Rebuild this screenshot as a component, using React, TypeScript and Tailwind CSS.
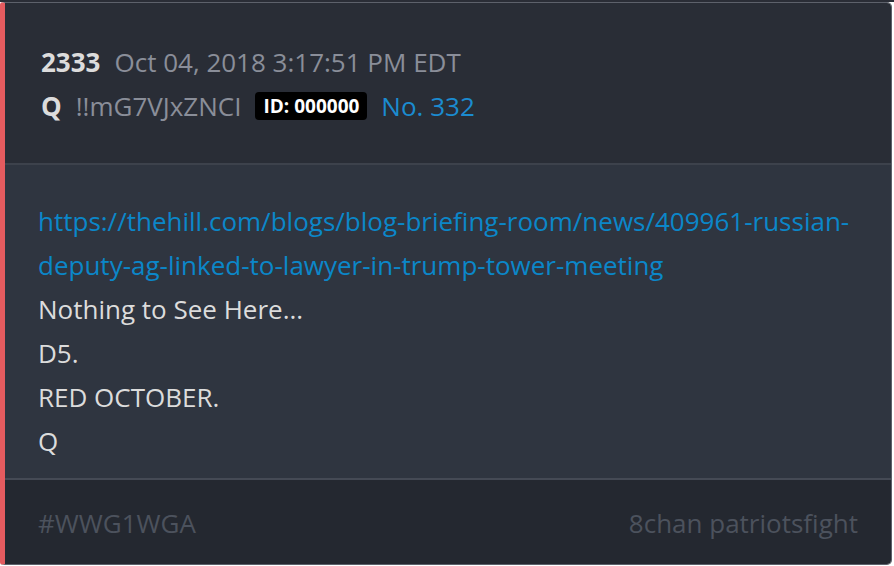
export default function App() {
  return (
    <div className="bg-white w-[894px] h-[566px]" style={{ fontFamily: '"Open Sans", "Noto Sans", sans-serif' }}>
      <div className="h-[2px] bg-[#2a2d36]" />
      <div className="w-[892px] h-[563px] flex flex-col border border-[#5d616b] border-l-[5px] border-l-[#e55b5f] rounded-r-[5px] rounded-l-[3px] overflow-hidden">
        {/* header */}
        <div className="h-[160px] bg-[#292d36] pl-[36px] pt-[37px] text-[26px] leading-[44px]">
          <div className="flex items-center">
            <span className="font-bold text-[#dcdcdc]">2333</span>
            <span className="ml-[14px] text-[#8a8e99]">Oct 04, 2018 3:17:51 PM EDT</span>
          </div>
          <div className="flex items-center">
            <span className="font-bold text-[#dcdcdc]">Q</span>
            <span className="ml-[14px] text-[#8a8e99]">!!mG7VJxZNCI</span>
            <span className="ml-[14px] bg-black text-white font-bold text-[19px] leading-[28px] px-[8px] rounded-[4px]">ID: 000000</span>
            <span className="ml-[14px] text-[#1b8bd0]">No. 332</span>
          </div>
        </div>
        <div className="h-[2px] bg-[#3d424c]" />
        {/* body */}
        <div className="flex-1 bg-[#2f3540] pl-[33px] pr-[30px] pt-[34px] text-[26px] leading-[44px] text-[#dcdcdc]">
          <div className="text-[#0b87c9]">https://thehill.com/blogs/blog-briefing-room/news/409961-russian-deputy-ag-linked-to-lawyer-in-trump-tower-meeting</div>
          <div>Nothing to See Here...</div>
          <div>D5.</div>
          <div>RED OCTOBER.</div>
          <div>Q</div>
        </div>
        <div className="h-[2px] bg-[#454a55]" />
        {/* footer */}
        <div className="h-[84px] bg-[#242830] pl-[33px] pr-[33px] pt-[2px] flex items-center justify-between text-[26px] text-[#4c525d]">
          <span>#WWG1WGA</span>
          <span>8chan patriotsfight</span>
        </div>
      </div>
    </div>
  );
}
